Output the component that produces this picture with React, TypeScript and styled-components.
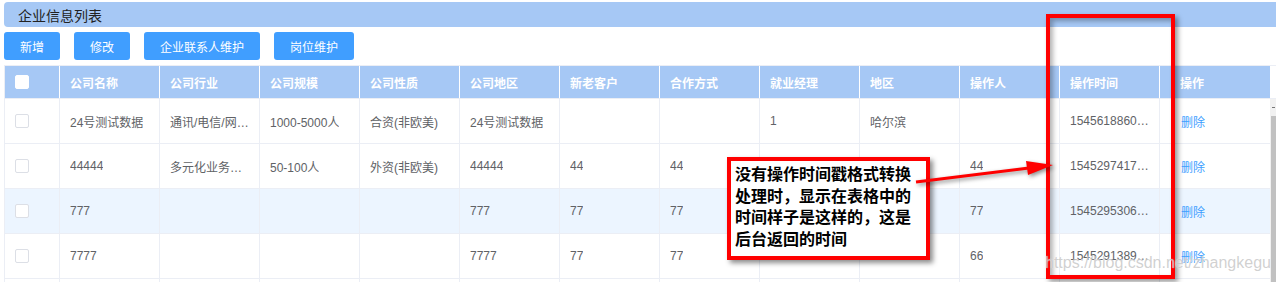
import React from 'react'
import styled, { createGlobalStyle } from 'styled-components'

const FONT = `"Liberation Sans", "Noto Sans CJK SC", sans-serif`

const GlobalStyle = createGlobalStyle`
  html, body {
    margin: 0;
    padding: 0;
    overflow: hidden;
    background: #fff;
    font-family: ${FONT};
  }
  * { box-sizing: border-box; }
`

const COLS = '55px repeat(11, 100px) 110px'

const Page = styled.div`
  position: relative;
  width: 1276px;
  height: 282px;
  overflow: hidden;
  padding: 2px 0 0 4px;
`

const TitleBar = styled.div`
  height: 25px;
  background: #a6c8f5;
  border-radius: 4px 0 0 4px;
  display: flex;
  align-items: center;
  padding-left: 14px;
  font-size: 14px;
  color: #222;
`

const Toolbar = styled.div`
  display: flex;
  gap: 14px;
  margin-top: 5px;
`

const Button = styled.button`
  height: 28px;
  padding: 0 16px;
  border: 0;
  border-radius: 3px;
  background: #409eff;
  color: #fff;
  font-family: ${FONT};
  font-size: 12px;
  cursor: pointer;
`

const Table = styled.div`
  margin-top: 5px;
  border-left: 1px solid #ebeef5;
  border-top: 1px solid #ebeef5;
`

const HeadRow = styled.div`
  display: grid;
  grid-template-columns: ${COLS} 6px;
  height: 33px;
  border-bottom: 1px solid #ebeef5;
`

const HeadCell = styled.div<{ last?: boolean }>`
  background: #a6c8f5;
  border-right: ${({ last }) => (last ? '0' : '1px solid #fff')};
  display: flex;
  align-items: center;
  padding: ${({ last }) => (last ? '0 10px 0 20px' : '0 10px')};
  color: #fff;
  font-size: 12px;
  font-weight: 700;
  white-space: nowrap;
`

const HeadGutter = styled.div`
  background: #fff;
`

const BodyArea = styled.div`
  display: flex;
`

const Rows = styled.div`
  width: 1265px;
`

const BodyRow = styled.div<{ hover?: boolean }>`
  display: grid;
  grid-template-columns: ${COLS};
  height: 45px;
  border-bottom: 1px solid #ebeef5;
  background: ${({ hover }) => (hover ? '#ecf5ff' : '#fff')};
`

const Cell = styled.div<{ last?: boolean }>`
  border-right: ${({ last }) => (last ? '0' : '1px solid #ebeef5')};
  display: flex;
  align-items: center;
  padding: ${({ last }) => (last ? '0 10px 0 21px' : '0 10px')};
  min-width: 0;
  color: #606266;
  font-size: 12px;
`

const Ellipsis = styled.span`
  overflow: hidden;
  white-space: nowrap;
  text-overflow: ellipsis;
`

const Checkbox = styled.span<{ head?: boolean }>`
  display: inline-block;
  width: 14px;
  height: 14px;
  border-radius: 2px;
  background: #fff;
  border: 1px solid ${({ head }) => (head ? '#fff' : '#dcdfe6')};
`

const Link = styled.span`
  color: #409eff;
  cursor: pointer;
`

const Gutter = styled.div`
  width: 6px;
  background: #f1f1f1;
  display: flex;
  flex-direction: column;
  align-items: flex-end;
`

const GutterArrow = styled.div`
  height: 17px;
  width: 6px;
  display: flex;
  justify-content: center;
  align-items: center;
  &::after {
    content: '';
    width: 3px;
    height: 1px;
    background: #777;
  }
`

const Thumb = styled.div`
  flex: 1;
  width: 5px;
  background: #c1c1c1;
`

const Note = styled.div`
  position: absolute;
  left: 727px;
  top: 157px;
  width: 203px;
  height: 103px;
  border: 4px solid #f00;
  background: #fff;
  box-shadow: 3px 3px 5px rgba(0, 0, 0, 0.45);
  padding: 3px 0 0 4px;
  font-size: 16px;
  font-weight: 700;
  line-height: 21.5px;
  color: #000;
  white-space: nowrap;
`

const Frame = styled.div`
  position: absolute;
  left: 1046px;
  top: 14px;
  width: 129px;
  height: 265px;
  border: 4px solid #f00;
  box-shadow: 3px 3px 5px rgba(0, 0, 0, 0.4), inset 3px 3px 5px rgba(0, 0, 0, 0.3);
  pointer-events: none;
`

const Arrow = styled.svg`
  position: absolute;
  left: 0;
  top: 0;
  pointer-events: none;
  filter: drop-shadow(2px 2px 2px rgba(0, 0, 0, 0.45));
`

const Watermark = styled.div`
  position: absolute;
  left: 1045px;
  top: 254px;
  font-family: "Liberation Sans", sans-serif;
  font-size: 16px;
  color: rgba(170, 170, 170, 0.55);
  text-shadow: 0 0 1px rgba(255, 255, 255, 0.9);
  pointer-events: none;
`

const headers = ['公司名称', '公司行业', '公司规模', '公司性质', '公司地区', '新老客户', '合作方式', '就业经理', '地区', '操作人', '操作时间']

const rows = [
  ['24号测试数据', '通讯/电信/网络设备', '1000-5000人', '合资(非欧美)', '24号测试数据', '', '', '1', '哈尔滨', '', '1545618860812'],
  ['44444', '多元化业务集团公司', '50-100人', '外资(非欧美)', '44444', '44', '44', '', '', '44', '1545297417235'],
  ['777', '', '', '', '777', '77', '77', '', '', '77', '1545295306114'],
  ['7777', '', '', '', '7777', '77', '77', '', '', '66', '1545291389402'],
  ['', '', '', '', '', '', '', '', '', '', '']
]

export default function App() {
  return (
    <>
      <GlobalStyle />
      <Page>
        <TitleBar>企业信息列表</TitleBar>
        <Toolbar>
          <Button>新增</Button>
          <Button>修改</Button>
          <Button>企业联系人维护</Button>
          <Button>岗位维护</Button>
        </Toolbar>
        <Table>
          <HeadRow>
            <HeadCell>
              <Checkbox head />
            </HeadCell>
            {headers.map(h => (
              <HeadCell key={h}>{h}</HeadCell>
            ))}
            <HeadCell last>操作</HeadCell>
            <HeadGutter />
          </HeadRow>
          <BodyArea>
            <Rows>
              {rows.map((row, i) => (
                <BodyRow key={i} hover={i === 2}>
                  <Cell>
                    <Checkbox />
                  </Cell>
                  {row.map((v, j) => (
                    <Cell key={j}>
                      <Ellipsis>{v}</Ellipsis>
                    </Cell>
                  ))}
                  <Cell last>{i < 4 && <Link>删除</Link>}</Cell>
                </BodyRow>
              ))}
            </Rows>
            <Gutter>
              <GutterArrow />
              <Thumb />
            </Gutter>
          </BodyArea>
        </Table>

        <Note>
          没有操作时间戳格式转换
          <br />
          处理时，显示在表格中的
          <br />
          时间样子是这样的，这是
          <br />
          后台返回的时间
        </Note>
        <Frame />
        <Arrow width="1276" height="282" viewBox="0 0 1276 282">
          <line x1="916" y1="182" x2="1029" y2="168" stroke="#f00" strokeWidth="3" />
          <polygon points="1053,165 1028,175 1026,161" fill="#f00" />
        </Arrow>
        <Watermark>https://blog.csdn.net/zhangkegu</Watermark>
      </Page>
    </>
  )
}
